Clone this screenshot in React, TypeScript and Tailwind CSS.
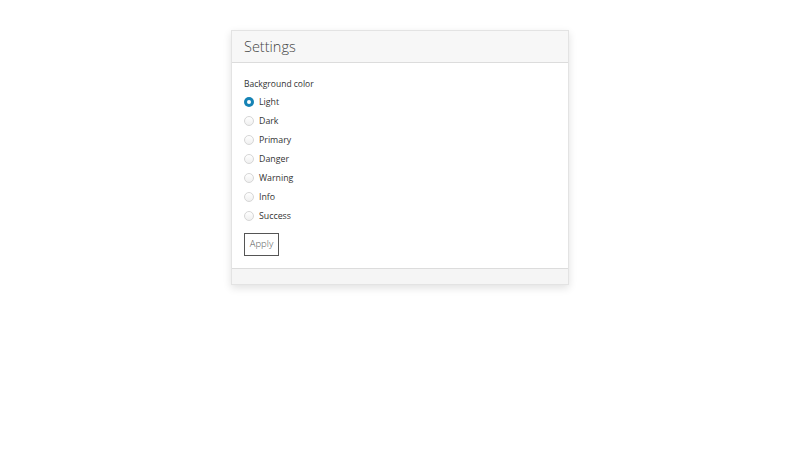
import { useState } from 'react';

const options = ['Light', 'Dark', 'Primary', 'Danger', 'Warning', 'Info', 'Success'];

export default function App() {
  const [selected, setSelected] = useState('Light');

  return (
    <div className="min-h-[450px] w-full bg-white pt-[30px] font-['Open_Sans',sans-serif] text-[#333]">
      <div className="ml-[231px] w-[338px] border border-[#e3e3e3] bg-white shadow-[0_3px_8px_rgba(0,0,0,0.12)]">
        <div className="flex h-[32px] items-center border-b border-[#dcdcdc] bg-[#f7f7f7] px-[12px]">
          <h1 className="pt-[1px] text-[14.5px] font-light text-[#444]">Settings</h1>
        </div>

        <div className="px-[12px] pt-[15px] pb-[12px]">
          <p className="text-[8.5px] text-[#333]">Background color</p>
          <div className="mt-[2px] flex flex-col">
            {options.map((opt) => {
              const checked = selected === opt;
              return (
                <label
                  key={opt}
                  className="flex h-[19px] cursor-pointer items-center gap-[5px] text-[8.8px]"
                  onClick={() => setSelected(opt)}
                >
                  {checked ? (
                    <span className="flex h-[10px] w-[10px] items-center justify-center rounded-full bg-[#1683b5]">
                      <span className="h-[4px] w-[4px] rounded-full bg-white" />
                    </span>
                  ) : (
                    <span className="h-[10px] w-[10px] rounded-full border border-[#d6d6d6] bg-gradient-to-b from-white to-[#f0f0f0]" />
                  )}
                  <span>{opt}</span>
                </label>
              );
            })}
          </div>
          <button className="mt-[7px] h-[23px] w-[35px] border border-[#555] bg-white text-[9.5px] font-light text-[#555]">
            Apply
          </button>
        </div>

        <div className="h-[16px] border-t border-[#dcdcdc] bg-[#f5f5f5]" />
      </div>
    </div>
  );
}
